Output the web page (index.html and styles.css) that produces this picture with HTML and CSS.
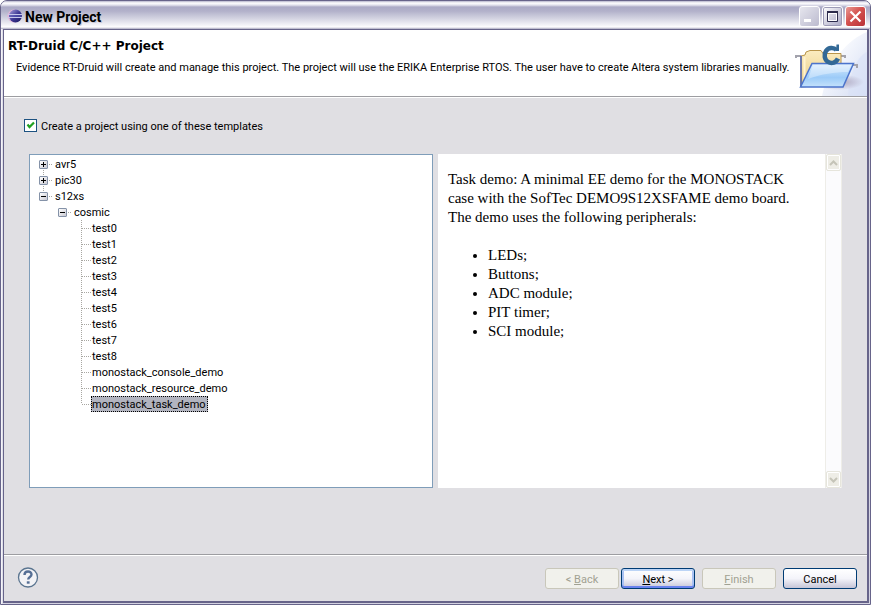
FILE: index.html
```
<!DOCTYPE html>
<html lang="en">
<head>
    <meta charset="UTF-8">
    <title>New Project</title>
    <link rel="stylesheet" href="styles.css">
</head>
<body>
    <div class="window">
        <div class="titlebar">
            <svg class="app-icon" width="16" height="16" viewBox="0 0 16 16">
                <defs>
                    <linearGradient id="ball" x1="0" y1="0" x2="1" y2="1">
                        <stop offset="0" stop-color="#a9a2dc"/>
                        <stop offset="0.5" stop-color="#403a96"/>
                        <stop offset="1" stop-color="#1b1760"/>
                    </linearGradient>
                </defs>
                <circle cx="7" cy="8" r="6.500" fill="#e3b4d8"/>
                <circle cx="8.500" cy="8" r="6.500" fill="url(#ball)"/>
                <path d="M1 6.500h14M1 9.500h14" stroke="#c8c8ec"/>
                <path d="M2 8h13" stroke="#5a5ab8"/>
            </svg>
            <span class="window-title">New Project</span>
            <button class="win-btn" disabled aria-label="Minimize">
                <svg width="19" height="19"><path d="M4 13.500h7" stroke="#fff" stroke-width="3"/></svg>
            </button>
            <button class="win-btn" aria-label="Maximize">
                <svg width="19" height="19"><path d="M4.500 4.500h10v10h-10z" fill="none" stroke="#2c2b4c"/><path d="M4 5h11" stroke="#2c2b4c" stroke-width="2"/><path d="M5.500 6.500h8v7h-8z" fill="none" stroke="#fff"/></svg>
            </button>
            <button class="win-btn close" aria-label="Close">
                <svg width="19" height="19"><path d="M4.500 4.500l10 10M14.500 4.500l-10 10" stroke="#fff" stroke-width="2.200"/></svg>
            </button>
        </div>

        <div class="client">
            <div class="banner">
                <div class="banner-text">
                    <h1>RT-Druid C/C++ Project</h1>
                    <p>Evidence RT-Druid will create and manage this project. The project will use the ERIKA Enterprise RTOS. The user have to create Altera system libraries manually.</p>
                </div>
                <svg class="banner-icon" width="75" height="66" viewBox="0 0 75 66">
                    <defs>
                        <linearGradient id="sweep" x1="0" y1="0" x2="1" y2="1">
                            <stop offset="0.200" stop-color="#fff"/>
                            <stop offset="1" stop-color="#d3dcf3"/>
                        </linearGradient>
                        <linearGradient id="front" x1="0" y1="0" x2="0" y2="1">
                            <stop offset="0" stop-color="#d9ecfd"/>
                            <stop offset="0.600" stop-color="#9ccbf8"/>
                            <stop offset="1" stop-color="#c5e2fb"/>
                        </linearGradient>
                        <linearGradient id="back" x1="0" y1="0" x2="0" y2="1">
                            <stop offset="0" stop-color="#fbecc0"/>
                            <stop offset="1" stop-color="#e9cd84"/>
                        </linearGradient>
                        <radialGradient id="shade">
                            <stop offset="0" stop-color="#a79fb8"/>
                            <stop offset="1" stop-color="#a79fb8" stop-opacity="0"/>
                        </radialGradient>
                    </defs>
                    <path d="M75 2C56 10 38 28 30 66h45z" fill="url(#sweep)"/>
                    <path d="M75 22C66 26 58 40 56 66h19z" fill="#d8e1f6" opacity="0.600"/>
                    <ellipse cx="46" cy="52" rx="26" ry="8" fill="url(#shade)"/>
                    <path d="M4 28v-2h5M47 26h6v2" fill="none" stroke="#a3a3ad" stroke-width="2"/>
                    <path d="M9 57V26l4-1 1-3 4-1.500h11l2 3h18v30z" fill="url(#back)" stroke="#b9954a"/>
                    <path d="M12.500 27v26" stroke="#fff3cf" stroke-width="2"/>
                    <path d="M9 26v31" stroke="#4a62b5" stroke-width="1.500"/>
                    <path d="M60 35h5v3" fill="none" stroke="#a3a3ad" stroke-width="2"/>
                    <path d="M20 33.500h41.500L51 57H8.500z" fill="url(#front)" stroke="#4c74cc" stroke-width="1.500"/>
                    <path d="M21 35h38l-3 7c-14 0-26 2-40 7z" fill="#fff" opacity="0.350"/>
                    <path d="M44.500 20A7 7.500 0 1 0 46 28.500" fill="none" stroke="#336996" stroke-width="4.500"/>
                    <path d="M44.500 14.500h2.500v6.500h-3z" fill="#336996"/>
                </svg>
            </div>

            <div class="content">
                <label class="template-check">
                    <input type="checkbox" checked>
                    Create a project using one of these templates
                </label>
                <div class="panes">
                    <div class="tree-pane">
                        <ul class="tree">
                            <li><div class="row"><button class="toggle plus" aria-label="Expand avr5"></button><span class="stub"></span><span class="label">avr5</span></div></li>
                            <li><div class="row"><button class="toggle plus" aria-label="Expand pic30"></button><span class="stub"></span><span class="label">pic30</span></div></li>
                            <li>
                                <div class="row"><button class="toggle" aria-label="Collapse s12xs"></button><span class="stub"></span><span class="label">s12xs</span></div>
                                <ul class="branch">
                                    <li>
                                        <div class="row"><button class="toggle" aria-label="Collapse cosmic"></button><span class="stub"></span><span class="label">cosmic</span></div>
                                        <ul class="leaves">
                                            <li class="row"><span class="stub"></span><span class="label">test0</span></li>
                                            <li class="row"><span class="stub"></span><span class="label">test1</span></li>
                                            <li class="row"><span class="stub"></span><span class="label">test2</span></li>
                                            <li class="row"><span class="stub"></span><span class="label">test3</span></li>
                                            <li class="row"><span class="stub"></span><span class="label">test4</span></li>
                                            <li class="row"><span class="stub"></span><span class="label">test5</span></li>
                                            <li class="row"><span class="stub"></span><span class="label">test6</span></li>
                                            <li class="row"><span class="stub"></span><span class="label">test7</span></li>
                                            <li class="row"><span class="stub"></span><span class="label">test8</span></li>
                                            <li class="row"><span class="stub"></span><span class="label">monostack_console_demo</span></li>
                                            <li class="row"><span class="stub"></span><span class="label">monostack_resource_demo</span></li>
                                            <li class="row"><span class="stub"></span><span class="label selected">monostack_task_demo</span></li>
                                        </ul>
                                    </li>
                                </ul>
                            </li>
                        </ul>
                    </div>
                    <div class="preview">
                        <div class="preview-text">
                            <p>Task demo: A minimal EE demo for the MONOSTACK case with the SofTec DEMO9S12XSFAME demo board.<br>The demo uses the following peripherals:</p>
                            <ul>
                                <li>LEDs;</li>
                                <li>Buttons;</li>
                                <li>ADC module;</li>
                                <li>PIT timer;</li>
                                <li>SCI module;</li>
                            </ul>
                        </div>
                        <div class="scrollbar">
                            <button disabled aria-label="Scroll up"><svg width="9" height="6"><path d="M1 5l3.500-3.500L8 5" fill="none" stroke="#c5c4b8" stroke-width="2"/></svg></button>
                            <button disabled aria-label="Scroll down"><svg width="9" height="6"><path d="M1 1l3.500 3.500L8 1" fill="none" stroke="#c5c4b8" stroke-width="2"/></svg></button>
                        </div>
                    </div>
                </div>
            </div>

            <div class="footer">
                <button class="help" aria-label="Help">
                    <svg width="22" height="22" viewBox="0 0 22 22">
                        <circle cx="11" cy="10.500" r="9.500" fill="#f3f3f6" stroke="#5b7590" stroke-width="1.300"/>
                        <path d="M7.500 8C7.500 3.500 14.500 3.500 14.500 7.500c0 2.500-3.300 2.500-3.300 5" fill="none" stroke="#566f95" stroke-width="2.400"/>
                        <path d="M9.800 14.300h2.800v2.400H9.800z" fill="#566f95"/>
                    </svg>
                </button>
                <div class="nav">
                    <button class="btn" disabled>&lt; <u>B</u>ack</button>
                    <button class="btn default"><u>N</u>ext &gt;</button>
                </div>
                <button class="btn" disabled><u>F</u>inish</button>
                <button class="btn">Cancel</button>
            </div>
        </div>
    </div>
</body>
</html>
```
FILE: styles.css
```
* {
    box-sizing: border-box;
}

body {
    margin: 0;
    padding: 0 3px 3px 0;
    height: 100vh;
    background: #fff;
    font-family: Roboto, sans-serif;
    font-size: 11px;
    line-height: 16px;
    color: #000;
}

button {
    font: inherit;
    padding: 0;
    margin: 0;
}

ul {
    list-style: none;
    margin: 0;
    padding: 0;
}

/* window frame */
.window {
    display: flex;
    flex-direction: column;
    height: 100%;
    padding: 0 1px 1px 2px;
    border: 1px solid #67648a;
    border-radius: 7px 7px 0 0;
    background: linear-gradient(to right, #fff, #d4d3e2 2px, #d4d3e2);
}

.titlebar {
    display: flex;
    align-items: center;
    gap: 2px;
    height: 28px;
    margin: 0 -1px 0 -2px;
    padding: 2px 4px 0 6px;
    border-radius: 6px 6px 0 0;
    background: linear-gradient(#b4b3cb, #fff 2px, #e4e4ee 4px, #abaac6 6px, #b2b1ca 10px, #d6d6e3 18px, #f8f8fb 25px, #fff 26px, #a9a8c0);
}

.app-icon {
    flex: none;
}

.window-title {
    flex: 1;
    padding-top: 2px;
    font-size: 14px;
    font-weight: bold;
    text-shadow: 1px 1px #c9c9d8;
}

.win-btn {
    display: flex;
    width: 21px;
    height: 21px;
    border: 1px solid #fff;
    border-radius: 3px;
    background: linear-gradient(135deg, #fff, #c9c8da 60%, #a9a8c4);
}

.win-btn:not(:disabled) {
    box-shadow: inset 0 0 0 1px #9c9ab6;
}

.win-btn:disabled {
    background: linear-gradient(135deg, #e6e6ee, #bcbbcf);
}

.win-btn.close {
    background: linear-gradient(135deg, #e99b95, #d4524f 45%, #b93237);
    box-shadow: none;
}

.client {
    display: flex;
    flex-direction: column;
    flex: 1;
    min-height: 0;
    border: 1px solid #67648a;
    border-right-width: 2px;
    border-bottom-width: 2px;
    background: #e0dfe3;
}

/* banner */
.banner {
    display: flex;
    height: 67px;
    flex: none;
    background: #fff;
    border-bottom: 1px solid #9d9da1;
}

.banner-text {
    flex: 1;
    min-width: 0;
    padding: 7px 0 0 4px;
    white-space: nowrap;
}

.banner h1 {
    margin: 0;
    font-family: "DejaVu Sans", sans-serif;
    font-size: 12px;
    line-height: 18px;
}

.banner p {
    margin: 5px 0 0 8px;
}

.banner-icon {
    flex: none;
}

/* content */
.content {
    display: flex;
    flex-direction: column;
    flex: 1;
    min-height: 0;
    padding: 20px 25px 66px 20px;
    border-top: 1px solid #fff;
}

.template-check {
    display: flex;
    align-items: center;
    gap: 4px;
    line-height: 18px;
}

.template-check input {
    appearance: none;
    width: 13px;
    height: 13px;
    margin: 0 0 4px;
    border: 1px solid #1d5281;
    background: #fff url("data:image/svg+xml,%3Csvg xmlns='http://www.w3.org/2000/svg' width='11' height='11'%3E%3Cpath d='M2.500 4.500l2 2.500 4.500-4.500' fill='none' stroke='%2321a121' stroke-width='2.200'/%3E%3C/svg%3E");
}

.panes {
    display: grid;
    grid-template-columns: 1fr 1fr;
    flex: 1;
    gap: 5px;
    min-height: 0;
    margin: 18px 0 0 5px;
}

.tree-pane,
.preview {
    min-width: 0;
    background: #fff;
}

.tree-pane {
    padding: 1px 0 0 9px;
    border: 1px solid #7f9db9;
}

.row {
    display: flex;
    align-items: center;
    height: 16px;
}

/* dotted connectors are drawn as 1px dots every 2px */
.tree {
    background: repeating-linear-gradient(#a8a7a2 0 1px, transparent 1px 2px) 4px 8px / 1px 32px no-repeat;
}

.branch {
    padding-left: 19px;
}

.leaves {
    padding-left: 23px;
    background: repeating-linear-gradient(#a8a7a2 0 1px, transparent 1px 2px) 23px 0 / 1px calc(100% - 8px) no-repeat;
}

.stub {
    width: 4px;
    height: 1px;
    margin-left: 1px;
    background: repeating-linear-gradient(to right, #a8a7a2 0 1px, transparent 1px 2px);
}

.leaves .stub {
    width: 9px;
}

.toggle {
    width: 9px;
    height: 9px;
    border: 1px solid #8492a8;
    border-radius: 1px;
    background:
        linear-gradient(#000, #000) center / 5px 1px no-repeat,
        linear-gradient(135deg, #fff, #c9c9d2);
}

.toggle.plus {
    background:
        linear-gradient(#000, #000) center / 5px 1px no-repeat,
        linear-gradient(#000, #000) center / 1px 5px no-repeat,
        linear-gradient(135deg, #fff, #c9c9d2);
}

.label {
    height: 16px;
    padding: 0 4px 0 1px;
    border: 1px solid transparent;
    line-height: 16px;
}

.leaves .label {
    padding-left: 0;
}

.label.selected {
    padding-right: 1px;
    border: 1px dotted #000;
    background: #b2b4bf;
}

.preview {
    display: flex;
    font-family: "Liberation Serif", serif;
    font-size: 15px;
    line-height: 19px;
}

.preview-text {
    flex: 1;
    padding: 16px 24px 16px 10px;
}

.preview-text p {
    margin: 0 0 19px;
}

.preview-text ul {
    list-style: disc;
    padding-left: 40px;
}

.scrollbar {
    display: flex;
    flex-direction: column;
    justify-content: space-between;
    width: 17px;
    border: 1px solid #eeede8;
    border-width: 0 1px;
    background: #fbfbfd;
}

.scrollbar button {
    display: flex;
    align-items: center;
    justify-content: center;
    height: 17px;
    border: 1px solid #e6e5dc;
    border-radius: 2px;
    background: #eeede6;
    box-shadow: inset 0 0 0 1px #fff;
}

/* footer */
.footer {
    display: flex;
    align-items: center;
    gap: 7px;
    flex: none;
    height: 47px;
    padding: 0 10px 0 13px;
    border-top: 1px solid #9d9da1;
    box-shadow: inset 0 1px #fff;
}

.help {
    display: flex;
    margin-right: auto;
    border: 0;
    background: none;
}

.nav {
    display: flex;
    gap: 2px;
}

.btn {
    width: 74px;
    height: 21px;
    padding-top: 2px;
    border: 1px solid #003c74;
    border-radius: 3px;
    background: linear-gradient(#fff, #f4f4fa 50%, #c6c5d7);
    line-height: 17px;
}

.btn.default {
    box-shadow: inset 0 2px #bcd4f6, inset 0 -2px #6982ee, inset 2px 0 #a9c1f3, inset -2px 0 #a9c1f3;
}

.btn:disabled {
    border-color: #c9c7ba;
    background: #f1f1ec;
    color: #a1a192;
}
```
